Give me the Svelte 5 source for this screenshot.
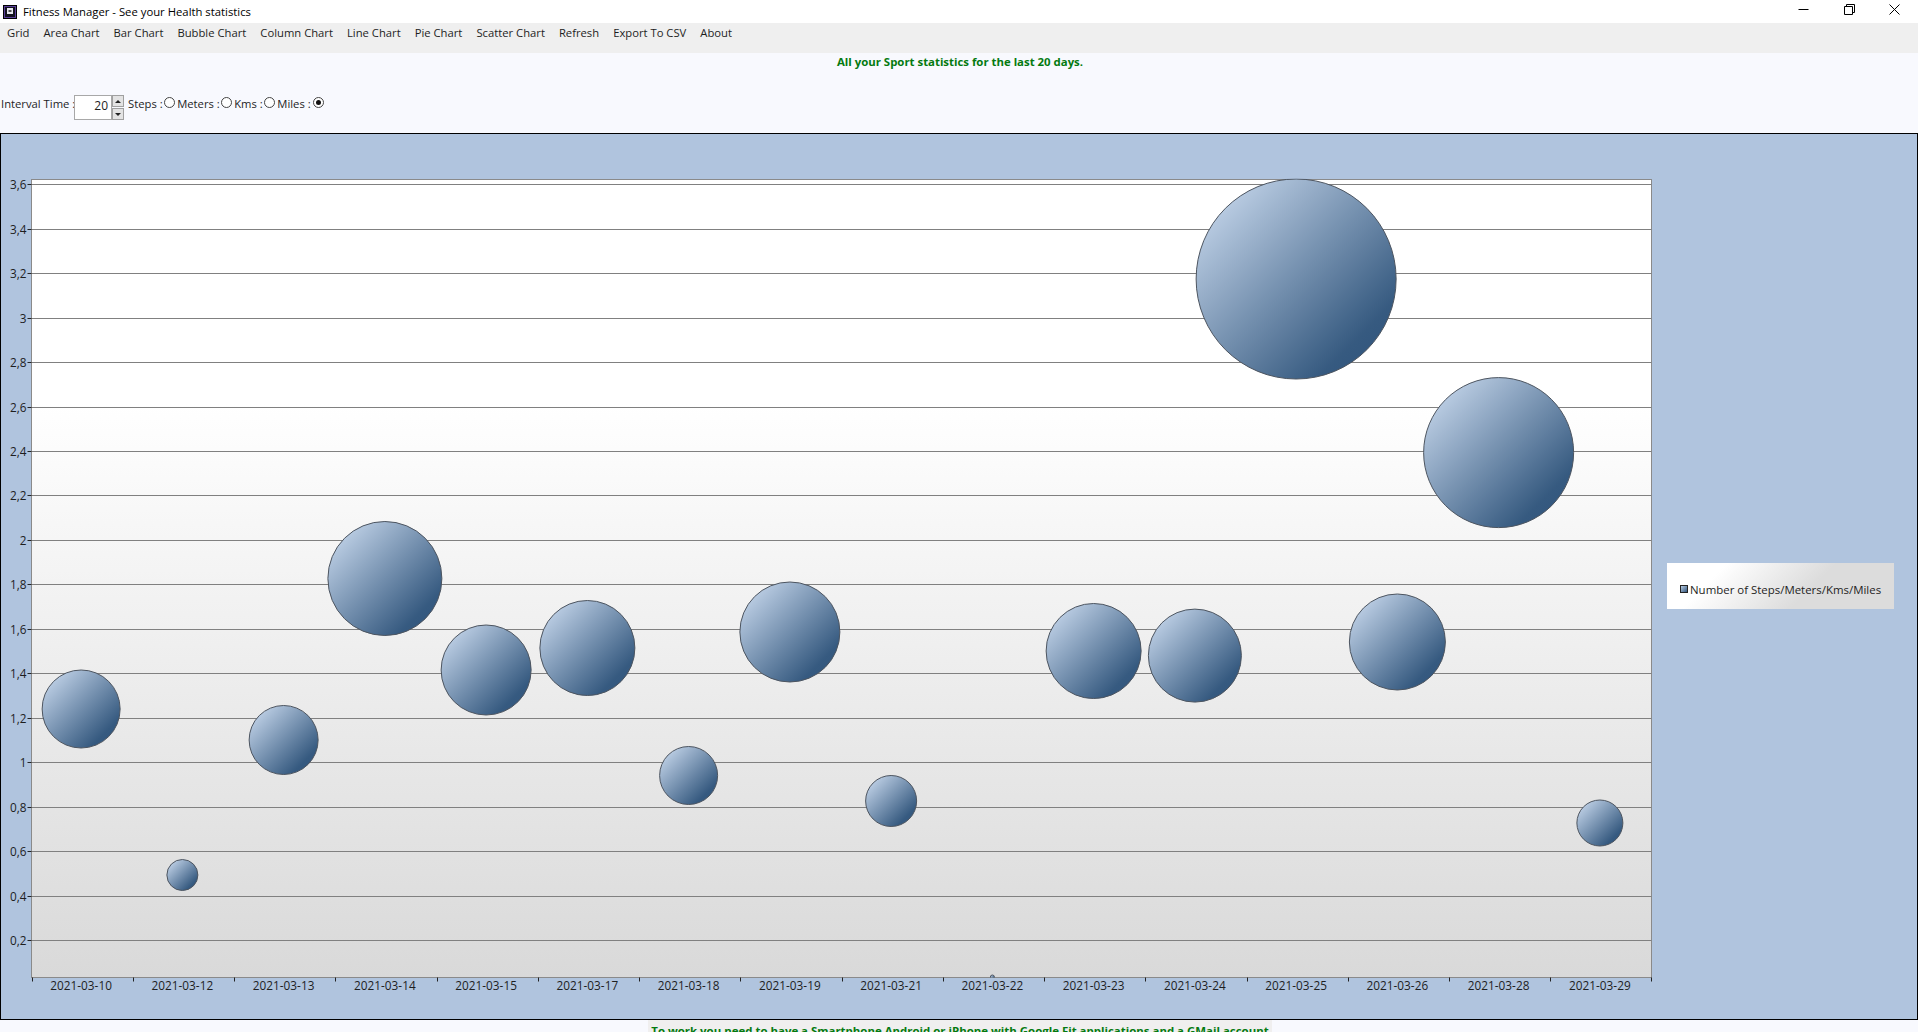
<script>
  const plot = { left: 31.5, right: 1651.5, top: 179.5, bottom: 977.5 };
  const cat = (plot.right - plot.left) / 16;
  const bubbles = [
    ['2021-03-10', 709, 39],
    ['2021-03-12', 875, 15.5],
    ['2021-03-13', 740, 34.5],
    ['2021-03-14', 578.5, 57],
    ['2021-03-15', 670, 45],
    ['2021-03-17', 648, 47.5],
    ['2021-03-18', 775.5, 29],
    ['2021-03-19', 632, 50],
    ['2021-03-21', 801, 25.5],
    ['2021-03-22', 977, 2],
    ['2021-03-23', 651, 47.5],
    ['2021-03-24', 655.6, 46.5],
    ['2021-03-25', 279, 100],
    ['2021-03-26', 642, 48],
    ['2021-03-28', 452.6, 75],
    ['2021-03-29', 823, 23]
  ];
  const yTicks = Array.from({ length: 18 }, (_, i) => {
    const v = (36 - i * 2) / 10;
    return { label: String(v).replace('.', ','), y: Math.round(184.2 + i * 44.47) };
  });
  const menu = ['Grid', 'Area Chart', 'Bar Chart', 'Bubble Chart', 'Column Chart', 'Line Chart', 'Pie Chart', 'Scatter Chart', 'Refresh', 'Export To CSV', 'About'];
  const chartTop = 133;
  const cx = (i) => plot.left + cat * (i + 0.5) - 1;
</script>

<div class="window">
  <header class="titlebar">
    <svg class="appicon" width="14" height="14" viewBox="0 0 14 14">
      <rect x="0.5" y="0.5" width="13" height="13" fill="#14121f" stroke="#000" />
      <rect x="1.5" y="1.5" width="11" height="11" fill="#14121f" stroke="#5b3f9a" />
      <rect x="4" y="3" width="6" height="6" fill="#e6e6ee" />
      <rect x="5.5" y="5" width="3" height="2" fill="#555" />
    </svg>
    <span class="title">Fitness Manager - See your Health statistics</span>
    <div class="controls">
      <svg width="12" height="12" viewBox="0 0 12 12"><path d="M0.5 5.5h10" stroke="#000" fill="none" /></svg>
      <svg width="12" height="12" viewBox="0 0 12 12"><path d="M0.5 2.5h8v8h-8zM2.5 2.5v-2h8v8h-2" stroke="#000" fill="none" /></svg>
      <svg width="12" height="12" viewBox="0 0 12 12"><path d="M0.5 0.5l10 10M10.5 0.5l-10 10" stroke="#000" fill="none" /></svg>
    </div>
  </header>

  <nav class="menu">
    {#each menu as item}<span class="menuitem">{item}</span>{/each}
  </nav>

  <main class="content">
    <div class="heading">All your Sport statistics for the last 20 days.</div>
    <div class="toolbar">
      <span class="lab first">Interval Time :</span>
      <span class="spinner">
        <span class="field">20</span>
        <span class="spin">
          <span class="btn"><i class="up"></i></span>
          <span class="btn"><i class="down"></i></span>
        </span>
      </span>
      <span class="lab steps">Steps :</span><span class="radio"></span>
      <span class="lab">Meters :</span><span class="radio"></span>
      <span class="lab">Kms :</span><span class="radio"></span>
      <span class="lab">Miles :</span><span class="radio on"></span>
    </div>

    <section class="chart">
      <svg width="1918" height="887" viewBox="0 {chartTop} 1918 887">
        <defs>
          <linearGradient id="plotbg" x1="0" y1="0" x2="0" y2="1">
            <stop offset="0.28" stop-color="#ffffff" />
            <stop offset="1" stop-color="#d9d9d9" />
          </linearGradient>
          <linearGradient id="ball" x1="0.12" y1="0.12" x2="0.88" y2="0.88">
            <stop offset="0" stop-color="#bccee4" />
            <stop offset="0.9" stop-color="#365a80" />
            <stop offset="1" stop-color="#33577e" />
          </linearGradient>
          <clipPath id="plotclip"><rect x={plot.left} y={plot.top - 1} width={plot.right - plot.left} height={plot.bottom - plot.top + 1} /></clipPath>
        </defs>
        <rect x={plot.left} y={plot.top} width={plot.right - plot.left} height={plot.bottom - plot.top} fill="url(#plotbg)" stroke="#8a8a8a" />
        {#each yTicks as t}
          <line x1={plot.left} x2={plot.right} y1={t.y + 0.5} y2={t.y + 0.5} stroke="#808080" />
          <line x1={plot.left - 4} x2={plot.left} y1={t.y + 0.5} y2={t.y + 0.5} stroke="#222" />
          <text class="axis" x={plot.left - 5} y={t.y + 5} text-anchor="end">{t.label}</text>
        {/each}
        <g clip-path="url(#plotclip)">
          {#each bubbles as b, i}
            <circle cx={cx(i)} cy={b[1]} r={b[2]} fill="url(#ball)" stroke="#4d5560" />
          {/each}
        </g>
        {#each bubbles as b, i}
          <line x1={Math.round(plot.left + cat * i) + 0.5} x2={Math.round(plot.left + cat * i) + 0.5} y1={plot.bottom} y2={plot.bottom + 4} stroke="#222" />
          <text class="axis" x={cx(i)} y="990" text-anchor="middle">{b[0]}</text>
        {/each}
        <line x1={plot.right} x2={plot.right} y1={plot.bottom} y2={plot.bottom + 4} stroke="#222" />
      </svg>
      <div class="legend">
        <span class="swatch"></span>
        <span>Number of Steps/Meters/Kms/Miles</span>
      </div>
    </section>

    <div class="foot"><span>To work you need to have a Smartphone Android or iPhone with Google Fit applications and a GMail account</span></div>
  </main>
</div>

<style>
  :global(body) { margin: 0; background: #f8f9fe; overflow: hidden; }
  .window {
    width: 1918px; height: 1032px; overflow: hidden;
    display: flex; flex-direction: column;
    font-family: "Open Sans", "Noto Sans", sans-serif; font-size: 11.25px; color: #1e1e1e;
  }
  .titlebar { height: 23px; flex: none; background: #fff; display: flex; align-items: center; padding-left: 3px; color: #000; }
  .appicon { flex: none; margin-right: 6px; }
  .title { font-size: 11.3px; }
  .controls { margin-left: auto; display: flex; gap: 33.5px; padding-right: 17px; margin-top: -3px; }
  .menu { height: 30px; box-sizing: border-box; flex: none; background: #efefef; display: flex; padding-top: 2px; }
  .menuitem { padding: 0 7px; line-height: 16px; white-space: nowrap; }
  .content { flex: 1; display: flex; flex-direction: column; background: #f8f9fe; min-height: 0; }
  .heading { height: 16px; margin-top: 1px; padding-left: 2px; text-align: center; font-weight: 700; font-size: 11.4px; color: #047a10; line-height: 16px; }
  .toolbar { height: 63px; flex: none; box-sizing: border-box; padding-top: 25px; display: flex; align-items: flex-start; }
  .lab { line-height: 17px; white-space: nowrap; margin-left: 2px; }
  .first { margin-left: 1px; width: 73px; }
  .steps { margin-left: 4px; }
  .spinner { display: flex; flex: none; height: 25px; }
  .field { width: 38px; box-sizing: border-box; height: 25px; background: #fff; border: 1px solid #a8a8a8; text-align: right; padding-right: 3px; line-height: 20px; font-size: 12px; }
  .spin { width: 12px; margin-left: 0; display: flex; flex-direction: column; gap: 1px; }
  .btn { height: 12px; box-sizing: border-box; background: #e3e3e3; border: 1px solid #a0a0a0; display: flex; align-items: center; justify-content: center; }
  .up { width: 0; height: 0; border: 3px solid transparent; border-top: 0; border-bottom: 3px solid #222; }
  .down { width: 0; height: 0; border: 3px solid transparent; border-bottom: 0; border-top: 3px solid #222; }
  .radio { width: 11px; height: 11px; box-sizing: border-box; flex: none; border: 1px solid #444; border-radius: 50%; background: #fff; margin: 2px 0 0 1.5px; position: relative; }
  .radio.on { margin-left: 2.5px; }
  .radio.on::after { content: ""; position: absolute; left: 2px; top: 2px; width: 5px; height: 5px; border-radius: 50%; background: #111; }
  .chart { position: relative; flex: none; height: 887px; box-sizing: border-box; background: #b0c4de; outline: 1px solid #000; outline-offset: -1px; }
  .chart svg { display: block; }
  .axis { font-family: "Open Sans", "Noto Sans", sans-serif; font-size: 11.8px; fill: #1e1e1e; }
  .legend {
    position: absolute; left: 1667px; top: 430px; width: 227px; height: 46px; box-sizing: border-box;
    background: linear-gradient(135deg, #fff 22%, #dcdcdc 62%);
    display: flex; align-items: center; padding: 6px 0 0 13px; gap: 2px; white-space: nowrap; font-size: 11.45px;
  }
  .swatch { width: 8px; height: 8px; background: linear-gradient(135deg, #b9cde3, #31557d); border: 1px solid #222; box-sizing: border-box; }
  .foot { text-align: center; font-weight: 700; font-size: 11.45px; color: #047a10; line-height: 16px; padding-left: 2px; }
  .foot span { display: inline-block; background: #f0efef; padding: 3px 3px 0; }
</style>
